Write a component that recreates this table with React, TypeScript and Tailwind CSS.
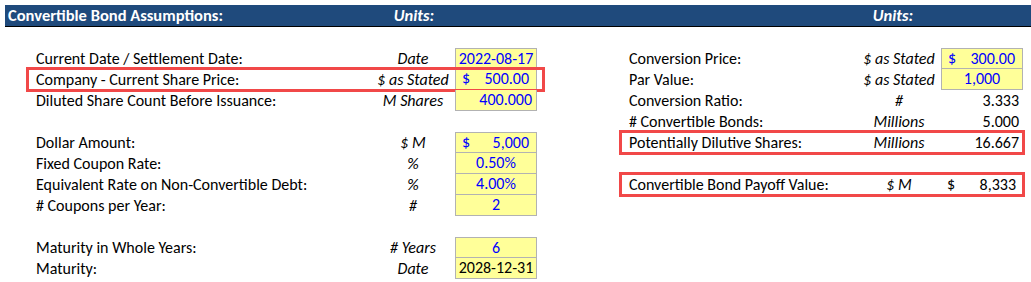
import React from 'react';

type Cell = {
  label: string;
  unit: string;
  value?: React.ReactNode;
  input?: boolean;
  align?: 'center' | 'right' | 'acct';
  black?: boolean;
  highlight?: boolean;
  blank?: boolean;
};

const leftRows: Cell[] = [
  { label: 'Current Date / Settlement Date:', unit: 'Date', value: '2022-08-17', input: true, align: 'center' },
  { label: 'Company - Current Share Price:', unit: '$ as Stated', value: '500.00', input: true, align: 'acct', highlight: true },
  { label: 'Diluted Share Count Before Issuance:', unit: 'M Shares', value: '400.000', input: true, align: 'right' },
  { blank: true, label: '', unit: '' },
  { label: 'Dollar Amount:', unit: '$ M', value: '5,000', input: true, align: 'acct' },
  { label: 'Fixed Coupon Rate:', unit: '%', value: '0.50%', input: true, align: 'center' },
  { label: 'Equivalent Rate on Non-Convertible Debt:', unit: '%', value: '4.00%', input: true, align: 'center' },
  { label: '# Coupons per Year:', unit: '#', value: '2', input: true, align: 'center' },
  { blank: true, label: '', unit: '' },
  { label: 'Maturity in Whole Years:', unit: '# Years', value: '6', input: true, align: 'center' },
  { label: 'Maturity:', unit: 'Date', value: '2028-12-31', input: true, align: 'center', black: true },
];

const rightRows: Cell[] = [
  { label: 'Conversion Price:', unit: '$ as Stated', value: '300.00', input: true, align: 'acct' },
  { label: 'Par Value:', unit: '$ as Stated', value: '1,000', input: true, align: 'center' },
  { label: 'Conversion Ratio:', unit: '#', value: '3.333', align: 'right', black: true },
  { label: '# Convertible Bonds:', unit: 'Millions', value: '5.000', align: 'right', black: true },
  { label: 'Potentially Dilutive Shares:', unit: 'Millions', value: '16.667', align: 'right', black: true, highlight: true },
  { blank: true, label: '', unit: '' },
  { label: 'Convertible Bond Payoff Value:', unit: '$ M', value: '8,333', align: 'acct', black: true, highlight: true },
];

function ValueCell({ row, first }: { row: Cell; first: boolean }) {
  const color = row.black ? 'text-black' : 'text-[#0000ff]';
  const box = row.input
    ? `bg-[#ffff99] border-x border-b border-[#b2b2b2] ${first ? 'border-t' : ''}`
    : '';
  return (
    <div className={`w-[82px] h-[21px] flex items-center ${box} ${color}`}>
      {row.align === 'acct' && (
        <div className="flex w-full justify-between pl-[6px] pr-[7px]">
          <span>$</span>
          <span>{row.value}</span>
        </div>
      )}
      {row.align === 'center' && <div className="w-full text-center">{row.value}</div>}
      {row.align === 'right' && <div className="w-full text-right pr-[4px]">{row.value}</div>}
    </div>
  );
}

function Section({ rows, labelW, tail }: { rows: Cell[]; labelW: string; tail: string }) {
  return (
    <div className="flex flex-col">
      {rows.map((row, i) => {
        if (row.blank) return <div key={i} className="h-[21px]" />;
        const prevInput = i > 0 && rows[i - 1].input && !rows[i - 1].blank;
        return (
          <div
            key={i}
            className={`flex items-center h-[21px] ${row.highlight ? 'outline-[3px] outline outline-[#f14848] -outline-offset-1' : ''}`}
          >
            <div className={`${labelW} pl-[8px] whitespace-nowrap`}>{row.label}</div>
            <div className="w-[76px] text-center italic whitespace-nowrap">{row.unit}</div>
            <div className="w-[4px]" />
            <ValueCell row={row} first={!prevInput} />
            <div className={tail} />
          </div>
        );
      })}
    </div>
  );
}

export default function App() {
  return (
    <div className="w-[1031px] h-[282px] bg-white overflow-hidden text-[16px] leading-none text-black font-['Carlito','Lato',sans-serif]">
      <div className="pt-[5px] pl-[5px]">
        <div className="h-[22px] bg-[#1f4a7c] border-b border-black flex items-center text-white text-[16.5px] font-bold whitespace-nowrap">
          <div className="w-[370px] pl-[3px]">Convertible Bond Assumptions:</div>
          <div className="w-[78px] text-center italic">Units:</div>
          <div className="w-[410px]" />
          <div className="w-[60px] text-center italic">Units:</div>
        </div>
      </div>
      <div className="flex pt-[21px] pl-[28px]">
        <Section rows={leftRows} labelW="w-[347px]" tail="w-[6px]" />
        <div className="w-[78px]" />
        <Section rows={rightRows} labelW="w-[240px]" tail="w-0" />
      </div>
    </div>
  );
}
